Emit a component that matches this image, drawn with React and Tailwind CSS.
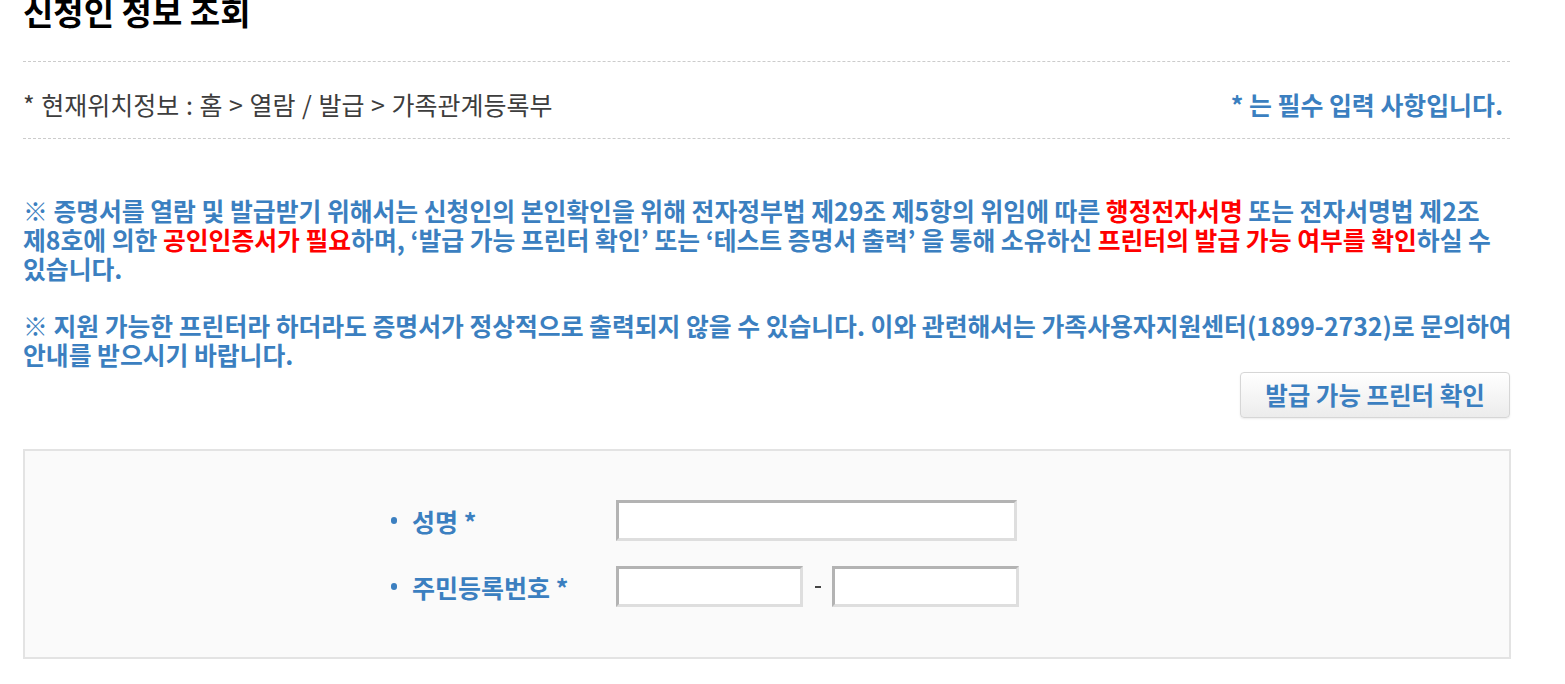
import { useState } from "react";

const font = "font-['Noto_Sans_CJK_KR','Noto_Sans',sans-serif]";

const Red = ({ children }) => <span className="text-[#ff0000]">{children}</span>;

const Field = ({ className = "", value, onChange }) => (
  <input
    type="text"
    value={value}
    onChange={(e) => onChange(e.target.value)}
    className={`h-[41px] bg-white border-[3px] border-t-[#b3b3b3] border-l-[#b3b3b3] border-b-[#dedede] border-r-[#dedede] outline-none px-2 text-[18px] ${className}`}
  />
);

const Label = ({ children }) => (
  <div className="w-[225px] flex items-center gap-[15px] text-[25px] leading-[30px] font-bold text-[#3b7fc0]">
    <span className="w-[6px] h-[7px] rounded-full bg-[#3b7fc0]" />
    <span>{children}</span>
  </div>
);

export default function App() {
  const [name, setName] = useState("");
  const [rrn1, setRrn1] = useState("");
  const [rrn2, setRrn2] = useState("");

  return (
    <div className={`w-[1565px] h-[684px] overflow-hidden bg-white ${font}`}>
      <div className="ml-[23px] w-[1488px]">
        {/* title */}
        <h2 className="-mt-[7px] text-[33px] leading-[36px] font-bold text-black">신청인 정보 조회</h2>

        {/* location */}
        <div className="mt-[32px] border-t border-dashed border-[#cccccc] w-[1487px]" />
        <div className="flex justify-between items-center pt-[27px] pb-[19px] pr-[8px] leading-[30px]">
          <span className="text-[25px] text-[#3d3d3d] [word-spacing:1px]">* 현재위치정보 : 홈 &gt; 열람 / 발급 &gt; 가족관계등록부</span>
          <span className="text-[24.9px] font-bold text-[#3b7fc0]">* 는 필수 입력 사항입니다.</span>
        </div>
        <div className="border-t border-dashed border-[#cccccc] w-[1487px]" />

        {/* notice */}
        <div className="mt-[57px] text-[24.8px] leading-[29px] font-bold text-[#3b7fc0] whitespace-nowrap">
          <p>
            ※ 증명서를 열람 및 발급받기 위해서는 신청인의 본인확인을 위해 전자정부법 제29조 제5항의 위임에 따른 <Red>행정전자서명</Red> 또는 전자서명법 제2조
            <br />
            제8호에 의한 <Red>공인인증서가 필요</Red>하며, ‘발급 가능 프린터 확인’ 또는 ‘테스트 증명서 출력’ 을 통해 소유하신 <Red>프린터의 발급 가능 여부를 확인</Red>하실 수
            <br />
            있습니다.
          </p>
          <p className="mt-[28px]">
            ※ 지원 가능한 프린터라 하더라도 증명서가 정상적으로 출력되지 않을 수 있습니다. 이와 관련해서는 가족사용자지원센터(1899-2732)로 문의하여
            <br />
            안내를 받으시기 바랍니다.
          </p>
        </div>

        <div className="flex justify-end mt-[3px] pr-[1px]">
          <button className="w-[270px] h-[46px] rounded-[4px] border border-[#d6d6d6] bg-gradient-to-b from-white to-[#ececec] shadow-[0_1px_2px_rgba(0,0,0,0.08)] text-[24.5px] font-bold text-[#3b7fc0]">
            발급 가능 프린터 확인
          </button>
        </div>

        {/* form */}
        <div className="mt-[31px] h-[210px] border-2 border-[#e3e3e3] bg-[#fafafa] pt-[49px] pl-[366px] flex flex-col gap-[25px]">
          <div className="flex items-center">
            <Label>성명 *</Label>
            <Field className="w-[401px]" value={name} onChange={setName} />
          </div>
          <div className="flex items-center">
            <Label>주민등록번호 *</Label>
            <Field className="w-[187px]" value={rrn1} onChange={setRrn1} />
            <span className="w-[29px] flex justify-center">
              <span className="w-[6px] h-[2px] bg-[#444444]" />
            </span>
            <Field className="w-[187px]" value={rrn2} onChange={setRrn2} />
          </div>
        </div>
      </div>
    </div>
  );
}
